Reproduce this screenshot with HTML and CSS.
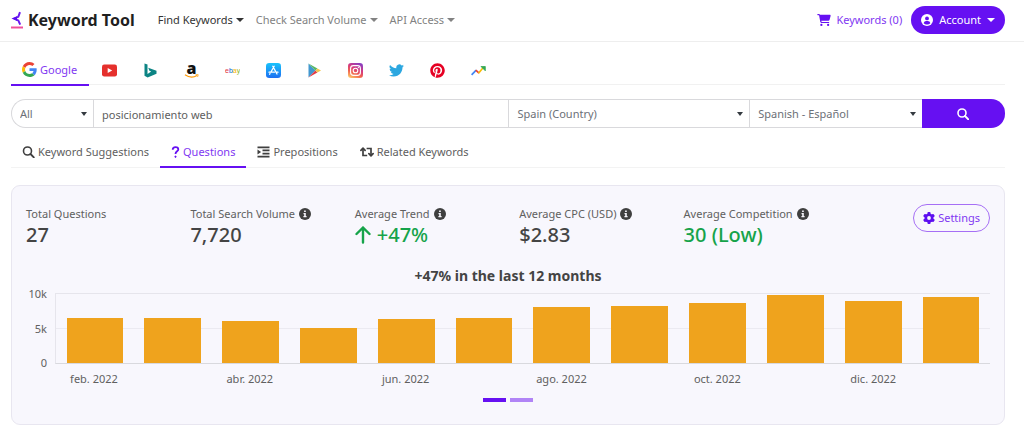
FILE: index.html
```html
<!DOCTYPE html>
<html lang="en">
<head>
<meta charset="utf-8">
<title>Keyword Tool</title>
<meta name="viewport" content="width=device-width, initial-scale=1">
<link rel="stylesheet" href="styles.css">
</head>
<body>
<header class="topbar">
  <a class="brand" href="#">
    <svg class="brand-mark" viewBox="0 0 12 18" aria-hidden="true"><path d="M9 1.200 7.300 5.800 3 7.600 7.300 9.400 9.200 13.600" fill="none" stroke="#6a18f0" stroke-width="2"/><path d="M1.200 7.600 6 5.200v4.800z" fill="#5a0cf0"/><path d="M0 15.500h12v2H0z" fill="#f0509a"/></svg>
    <span>Keyword Tool</span>
  </a>
  <nav class="menu">
    <button class="menu-item is-current" type="button">Find Keywords<span class="caret"></span></button>
    <button class="menu-item" type="button">Check Search Volume<span class="caret"></span></button>
    <button class="menu-item" type="button">API Access<span class="caret"></span></button>
  </nav>
  <a class="cart" href="#">
    <svg class="cart-icon" viewBox="0 0 576 512" aria-hidden="true"><path fill="currentColor" d="M0 24C0 10.700 10.700 0 24 0h45.500c22 0 41.500 12.800 50.600 32h411c26.300 0 45.500 25 38.600 50.400l-41 152.300c-8.500 31.400-37 53.300-69.500 53.300H170.700l5.400 28.500c2.200 11.300 12.100 19.500 23.600 19.500H488c13.300 0 24 10.700 24 24s-10.700 24-24 24H199.700c-34.600 0-64.300-24.600-70.700-58.500L77.400 54.500C76.700 50.700 73.400 48 69.500 48H24C10.700 48 0 37.300 0 24zM128 464a48 48 0 1 1 96 0 48 48 0 1 1-96 0zm336-48a48 48 0 1 1 0 96 48 48 0 1 1 0-96z"/></svg>
    Keywords (0)
  </a>
  <button class="account" type="button">
    <svg class="icon" viewBox="0 0 12 12" aria-hidden="true"><circle cx="6" cy="6" r="6" fill="#fff"/><circle cx="6" cy="4.400" r="1.900" fill="#6610f2"/><path d="M2.700 9.200c.3-1.500 1.300-2.200 2.500-2.200h1.600c1.200 0 2.200.7 2.500 2.200C8.500 10 7.300 10.500 6 10.500S3.500 10 2.700 9.200z" fill="#6610f2"/></svg>
    Account<span class="caret"></span>
  </button>
</header>

<main class="page">
  <nav class="engines" aria-label="Search engines">
    <a class="engine-google" href="#">
      <svg class="engine-icon" viewBox="0 0 48 48" aria-hidden="true"><path fill="#EA4335" d="M24 9.500c3.540 0 6.710 1.220 9.210 3.600l6.850-6.850C35.900 2.380 30.470 0 24 0 14.620 0 6.510 5.380 2.560 13.220l7.980 6.190C12.430 13.720 17.740 9.500 24 9.500z"/><path fill="#4285F4" d="M46.980 24.550c0-1.570-.15-3.090-.38-4.550H24v9.020h12.940c-.58 2.960-2.260 5.480-4.780 7.180l7.730 6c4.510-4.180 7.090-10.360 7.090-17.650z"/><path fill="#FBBC05" d="M10.530 28.590c-.48-1.450-.76-2.990-.76-4.590s.27-3.140.76-4.590l-7.980-6.190C.92 16.460 0 20.120 0 24c0 3.880.92 7.540 2.560 10.780l7.970-6.190z"/><path fill="#34A853" d="M24 48c6.480 0 11.930-2.130 15.890-5.810l-7.730-6c-2.150 1.450-4.920 2.300-8.160 2.300-6.260 0-11.570-4.220-13.470-9.910l-7.980 6.190C6.510 42.620 14.620 48 24 48z"/></svg>
      Google
    </a>
    <div class="engine-list">
      <a href="#" aria-label="YouTube"><svg class="engine-icon" viewBox="0 0 15 15"><rect y="1.500" width="15" height="12" rx="2.200" fill="#e5302d"/><path d="M5.700 4.900v5.200l4.500-2.600z" fill="#fff"/></svg></a>
      <a href="#" aria-label="Bing"><svg class="engine-icon" viewBox="0 0 15 15"><path fill="#0c8484" d="M1.500.5 4.500 1.600v9.300l3.700-2.300-1.800-.9-1.200-2.900 8.300 3v3L4.600 14.500l-3.100-1.800z"/></svg></a>
      <a href="#" aria-label="Amazon"><svg class="engine-icon amazon" viewBox="0 0 15 15"><text x="7.500" y="10.500" text-anchor="middle" class="amazon-letter">a</text><path d="M1 11.800q6.200 4.300 12 .7" fill="none" stroke="#f90" stroke-width="1.200"/><path d="M11.600 11.700h2.600l-.6 2.200" fill="none" stroke="#f90" stroke-width=".8"/></svg></a>
      <a href="#" aria-label="eBay"><svg class="engine-icon" viewBox="0 0 15 15"><text x="0" y="9.500" class="ebay-letters"><tspan fill="#e53238">e</tspan><tspan fill="#0064d2">b</tspan><tspan fill="#f5af02">a</tspan><tspan fill="#86b817">y</tspan></text></svg></a>
      <a href="#" aria-label="App Store"><svg class="engine-icon" viewBox="0 0 15 15"><defs><linearGradient id="store" x2="0" y2="1"><stop stop-color="#19c3fb"/><stop offset="1" stop-color="#1d6ff2"/></linearGradient></defs><rect width="15" height="15" rx="3.200" fill="url(#store)"/><path d="M8.200 3.300 4.800 9.200M6.800 3.300l4.200 7.700M3 9.200h5.400M10 9.200h2M4 10.600l-.4.700" stroke="#fff" stroke-width="1.300" stroke-linecap="round"/></svg></a>
      <a href="#" aria-label="Google Play"><svg class="engine-icon" viewBox="0 0 15 15"><path d="M1.500.5v14l7-7z" fill="#4298d0"/><path d="M1.500.5 10.400 5.500 8.400 7.500z" fill="#58b866"/><path d="M1.500 14.500 10.400 9.500 8.400 7.500z" fill="#e33b45"/><path d="m10.400 5.500 3.600 2-3.600 2-2-2z" fill="#f3c64d"/></svg></a>
      <a href="#" aria-label="Instagram"><svg class="engine-icon" viewBox="0 0 15 15"><defs><linearGradient id="insta" x1=".2" y1="1" x2=".7" y2="0"><stop stop-color="#fdc468"/><stop offset=".35" stop-color="#f0604f"/><stop offset=".65" stop-color="#d33a82"/><stop offset="1" stop-color="#8b3fc0"/></linearGradient></defs><rect width="15" height="15" rx="3.200" fill="url(#insta)"/><rect x="2.600" y="2.600" width="9.800" height="9.800" rx="2.800" fill="none" stroke="#fff" stroke-width="1.100"/><circle cx="7.500" cy="7.500" r="2.300" fill="none" stroke="#fff" stroke-width="1.100"/><circle cx="10.400" cy="4.600" r=".7" fill="#fff"/></svg></a>
      <a href="#" aria-label="Twitter"><svg class="engine-icon" viewBox="0 0 24 24"><path fill="#2ca7e0" d="M23.950 4.570a10 10 0 0 1-2.820.77 4.960 4.960 0 0 0 2.160-2.720c-.95.550-2 .960-3.130 1.180a4.920 4.920 0 0 0-8.380 4.480C7.690 8.090 4.070 6.130 1.640 3.160a4.920 4.920 0 0 0 1.520 6.570 4.900 4.900 0 0 1-2.230-.61v.06a4.920 4.920 0 0 0 3.950 4.830 5 5 0 0 1-2.210.08 4.940 4.940 0 0 0 4.600 3.420A9.870 9.870 0 0 1 0 19.540a14 14 0 0 0 7.550 2.210c9.050 0 14-7.500 14-13.980 0-.210 0-.420-.02-.630a9.940 9.940 0 0 0 2.420-2.570z"/></svg></a>
      <a href="#" aria-label="Pinterest"><svg class="engine-icon" viewBox="0 0 496 512"><path fill="#e60023" d="M496 256c0 137-111 248-248 248-25.600 0-50.200-3.900-73.400-11.100 10.100-16.500 25.200-43.500 30.800-65 3-11.600 15.400-59 15.400-59 8.100 15.400 31.700 28.500 56.800 28.500 74.800 0 128.700-68.800 128.700-154.300 0-81.900-66.900-143.200-152.900-143.200-107 0-163.900 71.800-163.900 150.100 0 36.400 19.400 81.700 50.300 96.100 4.700 2.200 7.200 1.200 8.300-3.300.8-3.400 5-20.300 6.900-28.100.6-2.500.3-4.700-1.700-7.100-10.100-12.500-18.300-35.300-18.300-56.600 0-54.700 41.400-107.600 112-107.600 60.900 0 103.600 41.500 103.600 100.900 0 67.100-33.900 113.600-78 113.600-24.300 0-42.600-20.100-36.700-44.800 7-29.500 20.500-61.300 20.500-82.600 0-19-10.200-34.900-31.400-34.900-24.900 0-44.900 25.700-44.900 60.200 0 22 7.400 36.800 7.400 36.800s-24.500 103.800-29 123.200c-5 21.400-3 51.600-.9 71.200C65.400 450.900 0 361.100 0 256 0 119 111 8 248 8s248 111 248 248z"/></svg></a>
      <a href="#" aria-label="Google Trends"><svg class="engine-icon" viewBox="0 0 15 15" fill="none" stroke-width="1.700"><path d="m.6 11.800 4.600-4.700" stroke="#4285f4"/><path d="m4.800 7.100 3.200 3" stroke="#ea4335"/><path d="m7.500 10.200 5-6" stroke="#fbbc05"/><path d="M10 3.500h4.300v4.300z" fill="#34a853" stroke="#34a853" stroke-width=".8"/></svg></a>
    </div>
  </nav>

  <form class="search">
    <label class="select-box"><select aria-label="Match"><option>All</option></select></label>
    <input class="query" type="text" aria-label="Keyword" value="posicionamiento web">
    <label class="select-box"><select aria-label="Country"><option>Spain (Country)</option></select></label>
    <label class="select-box"><select aria-label="Language"><option>Spanish - Español</option></select></label>
    <button class="submit" type="button" aria-label="Search"><svg class="icon" viewBox="0 0 12 12" fill="none" stroke="currentColor"><circle cx="5" cy="5" r="4" stroke-width="1.600"/><path d="m8 8 3.300 3.300" stroke-width="1.900" stroke-linecap="round"/></svg></button>
  </form>

  <nav class="tabs" aria-label="Result types">
    <a href="#"><svg class="icon" viewBox="0 0 12 12" fill="none" stroke="currentColor" aria-hidden="true"><circle cx="5" cy="5" r="4" stroke-width="1.600"/><path d="m8 8 3.300 3.300" stroke-width="1.900" stroke-linecap="round"/></svg>Keyword Suggestions</a>
    <a class="is-active" href="#"><svg class="icon question" viewBox="0 0 8 12" fill="none" stroke="currentColor" aria-hidden="true"><path d="M1.200 3.700C1.200 1.900 2.300 1.100 4 1.100s2.800.9 2.800 2.300C6.800 5.500 4 5.200 4 8" stroke-width="1.800"/><circle cx="4" cy="10.700" r=".7" fill="currentColor" stroke-width=".8"/></svg>Questions</a>
    <a href="#"><svg class="icon" viewBox="0 0 12 12" fill="currentColor" aria-hidden="true"><path d="M0 .5h12v1.700H0zM5 3.600h7v1.700H5zM5 6.700h7v1.700H5zM0 9.800h12v1.700H0zM0 3.400l3.600 2.600L0 8.600z"/></svg>Prepositions</a>
    <a href="#"><svg class="icon retweet" viewBox="0 0 14 12" fill="none" stroke="currentColor" stroke-width="1.700" aria-hidden="true"><path d="M3 2.500v7h4.200M6.600 2.500H11v7"/><path d="M.9 4.300 3 2.200l2.100 2.100M8.900 7.700 11 9.800l2.100-2.100" stroke-linecap="round" stroke-linejoin="round"/></svg>Related Keywords</a>
  </nav>

  <section class="summary">
    <div class="summary-head">
      <dl class="stats">
        <div><dt>Total Questions</dt><dd>27</dd></div>
        <div><dt>Total Search Volume<span class="info"><svg viewBox="0 0 12 12" aria-hidden="true"><circle cx="6" cy="6" r="6" fill="#3f3f3f"/><path d="M5.100 2.500h1.700v1.500H5.100zM4.500 5h2.300v3h.8v1.200H4.400V8h.8V6.200h-.7z" fill="#f8f7fd"/></svg></span></dt><dd>7,720</dd></div>
        <div><dt>Average Trend<span class="info"><svg viewBox="0 0 12 12" aria-hidden="true"><circle cx="6" cy="6" r="6" fill="#3f3f3f"/><path d="M5.100 2.500h1.700v1.500H5.100zM4.500 5h2.300v3h.8v1.200H4.400V8h.8V6.200h-.7z" fill="#f8f7fd"/></svg></span></dt><dd class="good"><svg class="arrow" viewBox="0 0 16 18" fill="none" stroke="currentColor" stroke-width="2.400" stroke-linecap="round" stroke-linejoin="round" aria-hidden="true"><path d="M8 16.500V1.500M1.500 8 8 1.500 14.500 8"/></svg>+47%</dd></div>
        <div><dt>Average CPC (USD)<span class="info"><svg viewBox="0 0 12 12" aria-hidden="true"><circle cx="6" cy="6" r="6" fill="#3f3f3f"/><path d="M5.100 2.500h1.700v1.500H5.100zM4.500 5h2.300v3h.8v1.200H4.400V8h.8V6.200h-.7z" fill="#f8f7fd"/></svg></span></dt><dd>$2.83</dd></div>
        <div><dt>Average Competition<span class="info"><svg viewBox="0 0 12 12" aria-hidden="true"><circle cx="6" cy="6" r="6" fill="#3f3f3f"/><path d="M5.100 2.500h1.700v1.500H5.100zM4.500 5h2.300v3h.8v1.200H4.400V8h.8V6.200h-.7z" fill="#f8f7fd"/></svg></span></dt><dd class="good">30 (Low)</dd></div>
      </dl>
      <button class="settings" type="button"><svg class="icon" viewBox="0 0 12 12" aria-hidden="true"><g fill="#5d0ff0"><circle cx="6" cy="6" r="4.500"/><rect x="4.500" width="3" height="12" rx=".8"/><rect x="4.500" width="3" height="12" rx=".8" transform="rotate(60 6 6)"/><rect x="4.500" width="3" height="12" rx=".8" transform="rotate(120 6 6)"/></g><circle cx="6" cy="6" r="1.900" fill="#f8f7fd"/></svg>Settings</button>
    </div>

    <h2 class="chart-title">+47% in the last 12 months</h2>
    <div class="chart">
      <div class="y-axis"><span>10k</span><span>5k</span><span>0</span></div>
      <div class="plot">
        <div class="slot"><div class="bar" style="height:64%"></div></div>
        <div class="slot"><div class="bar" style="height:65%"></div></div>
        <div class="slot"><div class="bar" style="height:60%"></div></div>
        <div class="slot"><div class="bar" style="height:50%"></div></div>
        <div class="slot"><div class="bar" style="height:63%"></div></div>
        <div class="slot"><div class="bar" style="height:64%"></div></div>
        <div class="slot"><div class="bar" style="height:80%"></div></div>
        <div class="slot"><div class="bar" style="height:81%"></div></div>
        <div class="slot"><div class="bar" style="height:86%"></div></div>
        <div class="slot"><div class="bar" style="height:97%"></div></div>
        <div class="slot"><div class="bar" style="height:89%"></div></div>
        <div class="slot"><div class="bar" style="height:94%"></div></div>
      </div>
      <div class="x-axis">
        <span>feb. 2022</span><span></span><span>abr. 2022</span><span></span><span>jun. 2022</span><span></span><span>ago. 2022</span><span></span><span>oct. 2022</span><span></span><span>dic. 2022</span><span></span>
      </div>
    </div>
    <div class="pager">
      <button class="is-on" type="button" aria-label="Chart 1"></button>
      <button type="button" aria-label="Chart 2"></button>
    </div>
  </section>
</main>
</body>
</html>
```
FILE: styles.css
```css
* {
  box-sizing: border-box;
}

body {
  margin: 0;
  background: #fff;
  color: #606060;
  font: 11px/18px "Noto Sans", "Open Sans", sans-serif;
}

a {
  color: inherit;
  text-decoration: none;
}

button,
input,
select {
  font: inherit;
  color: inherit;
  margin: 0;
}

button {
  padding: 0;
  border: 0;
  background: none;
}

svg {
  display: block;
  flex: none;
}

.icon {
  width: 12px;
  height: 12px;
}

.caret {
  border: 4px solid transparent;
  border-top-color: currentColor;
  border-bottom: 0;
}

/* Top bar */
.topbar {
  display: flex;
  align-items: center;
  height: 42px;
  padding: 0 19px 2px 11px;
  border-bottom: 1px solid #eee;
}

.brand {
  display: flex;
  align-items: center;
  gap: 5px;
  color: #1f1f1f;
  font-size: 16px;
  font-weight: 700;
}

.brand-mark {
  width: 12px;
  height: 18px;
}

.menu {
  display: flex;
  gap: 12px;
  margin: 0 auto 0 23px;
}

.menu-item {
  display: flex;
  align-items: center;
  gap: 3px;
  color: #828282;
}

.is-current {
  color: #333;
}

.cart {
  display: flex;
  align-items: center;
  gap: 5px;
  color: #8138f2;
}

.cart-icon {
  width: 14px;
  height: 12px;
  color: #6610f2;
}

.account {
  display: flex;
  align-items: center;
  gap: 6px;
  height: 28px;
  margin-left: 9px;
  padding: 0 10px;
  border-radius: 14px;
  background: #6610f2;
  color: #fff;
}

/* Engines */
.page {
  padding: 0 19px 11px 11px;
}

.engines {
  display: flex;
  height: 43px;
  border-bottom: 1px solid #f1f1f1;
}

.engine-google {
  display: flex;
  align-items: center;
  gap: 3px;
  height: 44px;
  padding: 13px 12px 0 11px;
  border-bottom: 2px solid #6610f2;
  color: #8138f2;
}

.engine-list {
  display: flex;
  align-items: center;
  gap: 26px;
  padding: 14px 0 0 13px;
}

.engine-icon {
  width: 15px;
  height: 15px;
}

.amazon {
  overflow: visible;
}

.amazon-letter {
  font: 800 16px "Open Sans", sans-serif;
  fill: #111;
}

.ebay-letters {
  font: 7px "Liberation Sans", sans-serif;
}

/* Search */
.search {
  display: grid;
  grid-template-columns: 82px 416fr 241fr 173fr 83px;
  height: 29px;
  margin-top: 14px;
}

.select-box {
  display: grid;
  align-items: center;
  border: 1px solid #d9d9dc;
  border-right: 0;
  overflow: hidden;
}

.select-box::after {
  content: "";
  grid-area: 1 / 1;
  justify-self: end;
  margin-right: 6px;
  border: 3px solid transparent;
  border-top: 4px solid #343a40;
  border-bottom: 0;
  pointer-events: none;
}

.select-box select {
  grid-area: 1 / 1;
  width: 100%;
  height: 100%;
  padding: 0 8px;
  border: 0;
  background: none;
  color: #6c7077;
  appearance: none;
}

.select-box:first-child {
  border-radius: 15px 0 0 15px;
}

.query {
  min-width: 0;
  padding: 2px 8px 0;
  border: 1px solid #d9d9dc;
  border-right: 0;
}

.submit {
  display: grid;
  place-items: center;
  border-radius: 0 14px 14px 0;
  background: #6610f2;
  color: #fff;
}

/* Tabs */
.tabs {
  display: flex;
  height: 31px;
  margin-top: 9px;
  border-bottom: 1px solid #f3f3f3;
}

.tabs a {
  display: flex;
  align-items: center;
  gap: 3px;
  height: 31px;
  padding: 1px 11px 0;
  border-bottom: 2px solid transparent;
}

.tabs .icon {
  width: 13px;
  color: #3f3f3f;
}

.tabs .question {
  width: 9px;
  color: #6610f2;
}

.tabs .retweet {
  width: 14px;
}

.tabs .is-active {
  border-color: #6610f2;
  color: #8138f2;
}

/* Summary card */
.summary {
  margin-top: 17px;
  padding: 18px 14px 22px;
  border: 1px solid #e8e6f0;
  border-radius: 9px;
  background: #f8f7fd;
}

.summary-head {
  display: flex;
  align-items: flex-start;
}

.stats {
  display: grid;
  grid-template-columns: repeat(5, 1fr);
  flex: 0 1 822px;
  margin: 0 auto 0 0;
  padding-top: 1px;
}

.stats dt {
  display: flex;
  align-items: center;
  gap: 4px;
  white-space: nowrap;
}

.stats dd {
  display: flex;
  align-items: center;
  gap: 6px;
  margin: 0;
  color: #444;
  font-size: 20px;
  line-height: 24px;
  font-weight: 500;
}

.stats .good {
  color: #16a34a;
}

.info {
  width: 12px;
}

.arrow {
  width: 16px;
  height: 18px;
}

.settings {
  display: flex;
  align-items: center;
  gap: 3px;
  height: 28px;
  padding: 0 9px;
  border: 1px solid #a66ff5;
  border-radius: 14px;
  color: #8138f2;
}

.chart-title {
  margin: 20px 0 8px;
  color: #444;
  font-size: 14px;
  line-height: 18px;
  font-weight: 700;
  text-align: center;
}

.chart {
  display: grid;
  grid-template-columns: 21px 1fr;
  column-gap: 8px;
}

.y-axis {
  display: flex;
  flex-direction: column;
  justify-content: space-between;
  margin: -8px 0;
  text-align: right;
}

.plot {
  display: flex;
  height: 71px;
  border-bottom: 1px solid #d9d9de;
  border-left: 1px solid #e6e5ec;
  background: linear-gradient(#e6e5ec, #e6e5ec) 0 0 / 100% 1px no-repeat,
    linear-gradient(#ebeaf1, #ebeaf1) 0 35px / 100% 1px no-repeat;
}

.slot {
  display: flex;
  flex: 1;
  align-items: flex-end;
  justify-content: center;
}

.bar {
  width: 73%;
  background: #efa31d;
}

.x-axis {
  display: flex;
  grid-column: 2;
  margin-top: 6px;
}

.x-axis span {
  flex: 1 1 0;
  text-align: center;
  white-space: nowrap;
}

.pager {
  display: flex;
  justify-content: center;
  gap: 4px;
  margin-top: 10px;
}

.pager button {
  width: 23px;
  height: 4px;
  background: #b184f6;
}

.pager .is-on {
  background: #6610f2;
}
```
